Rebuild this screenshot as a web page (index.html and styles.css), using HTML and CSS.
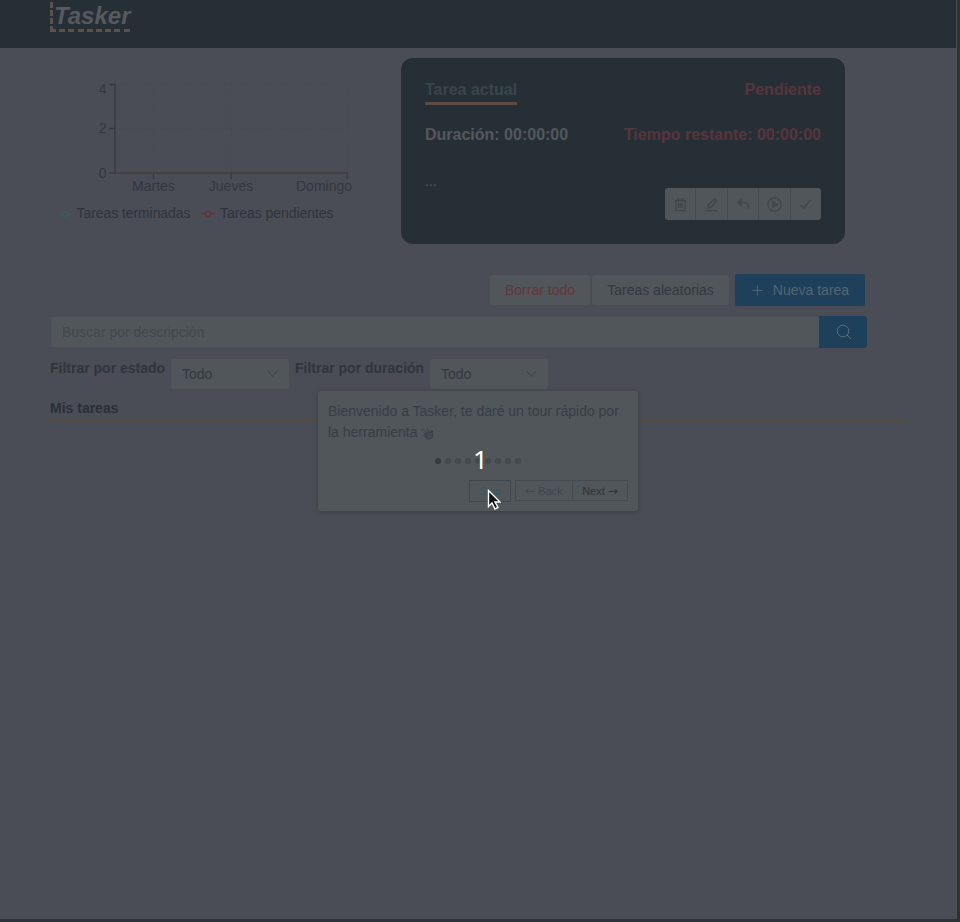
FILE: index.html
```html
<!DOCTYPE html>
<html lang="es">
<head>
<meta charset="utf-8">
<title>Tasker</title>
<link rel="stylesheet" href="styles.css">
</head>
<body>
<div class="app">
  <header class="header"><div class="logo">Tasker</div></header>
  <main>
    <section class="summary">
      <svg class="chart" width="330" height="170" viewBox="40 70 330 170">
        <g class="grid"><path d="M115 84.5H348M115 128.500H348M153.500 84V172M231.500 84V172M347.500 84V172"/></g>
        <path class="axis" d="M109 84.500H115V172.500M109 128.500H115M109 173H115M153.500 173v6M231 173v6M347 173v6"/>
        <path class="series" d="M115 173H348"/>
        <g class="ticks">
          <text x="106.500" y="94" text-anchor="end">4</text>
          <text x="106.500" y="133" text-anchor="end">2</text>
          <text x="106.500" y="178" text-anchor="end">0</text>
          <text x="153.500" y="191" text-anchor="middle">Martes</text>
          <text x="231" y="191" text-anchor="middle">Jueves</text>
          <text x="324" y="191" text-anchor="middle">Domingo</text>
        </g>
        <g class="done"><path d="M58 214h4.500M67.500 214h4.500"/><circle cx="65" cy="214" r="2.500"/></g>
        <g class="pending"><path d="M201 214h4.500M210.500 214h4.500"/><circle cx="208" cy="214" r="2.500"/></g>
        <g class="legend"><text x="76.500" y="218" textLength="114">Tareas terminadas</text><text x="220" y="218" textLength="113.500">Tareas pendientes</text></g>
      </svg>
      <article class="card">
        <div class="row"><h2 class="title">Tarea actual</h2><span class="red">Pendiente</span></div>
        <div class="row times"><span>Duración: 00:00:00</span><span class="red">Tiempo restante: 00:00:00</span></div>
        <p class="desc">...</p>
        <div class="actions">
          <span><svg viewBox="0 0 16 16"><path d="M1.500 4h13M5 4V2h6v2M3 4v10.500h10V4M6 6.500v5M8 6.500v5M10 6.500v5"/></svg></span>
          <span><svg viewBox="0 0 16 16"><path d="M1.500 14.500h13M4 11.500l.700-3L11 2l2.500 2.500-6.500 6.500zM9.500 3.500l2.500 2.500"/></svg></span>
          <span><svg viewBox="0 0 16 16"><path class="solid" d="M5.500 3L2 6l3.500 3z"/><path d="M3 6h6.500q3.800 0 3.800 6.500"/></svg></span>
          <span><svg viewBox="0 0 16 16"><circle cx="8" cy="8" r="7"/><path class="solid" d="M6.300 5l4.500 3-4.500 3z"/></svg></span>
          <span><svg viewBox="0 0 16 16"><path d="M2.500 8.500l3.500 3.500L13.500 3"/></svg></span>
        </div>
      </article>
    </section>
    <div class="toolbar">
      <div class="btn danger">Borrar todo</div>
      <div class="btn random">Tareas aleatorias</div>
      <div class="btn primary"><svg viewBox="0 0 14 14"><path d="M7 1.500v11M1.500 7h11"/></svg>Nueva tarea</div>
    </div>
    <div class="search">
      <div class="field">Buscar por descripción</div>
      <div class="go"><svg viewBox="0 0 16 16"><circle cx="7" cy="7" r="5.800"/><path d="M11 11l4 4"/></svg></div>
    </div>
    <div class="filters">
      <b class="status">Filtrar por estado</b>
      <div class="select">Todo<svg viewBox="0 0 12 8"><path d="M1 1l5 6 5-6"/></svg></div>
      <b class="duration">Filtrar por duración</b>
      <div class="select">Todo<svg viewBox="0 0 12 8"><path d="M1 1l5 6 5-6"/></svg></div>
    </div>
    <h3 class="tasks">Mis tareas</h3>
  </main>
</div>
<div class="tour">
  <p>Bienvenido a Tasker, te daré un tour rápido por la herramienta <svg class="wave" viewBox="0 0 14 14"><path class="palm" d="M3 7L9 4l1.500 2L11 3.500q1.500 0 1.500 2v3q0 4.500-4 4.500-2.500 0-4-2z"/><path d="M2.500 5.500l4 4M4 3.500l4 4.500M6.500 2l3.500 4.500M2.500 8.500l3 3M10.500 6.500l.500-3q1.500 0 1.500 2v3q0 4.500-4 4.500-2.500 0-4-2M.800 4l2-2.500"/></svg></p>
  <div class="dots"><i></i><i></i><i></i><i></i><i></i><i></i><i></i><i></i><i></i></div>
  <div class="nav"><span class="skip">Skip</span><span class="back"><em>←</em> Back</span><span class="next">Next <em>→</em></span></div>
</div>
<div class="count">1</div>
<svg class="cursor" width="14" height="22" viewBox="0 0 14 22"><path d="M1.500 1.500V17.500L5 14l3 6 3-1.500-3-5.500h5z"/></svg>
</body>
</html>
```

FILE: styles.css
```css
* { box-sizing: border-box; }
body { margin: 0; width: 960px; height: 922px; overflow: hidden; position: relative; background: #2c3337; color: #343840; font: 14px/22px "Liberation Sans", Arial, sans-serif; }
svg { fill: none; stroke: currentColor; }
.app { width: 957px; height: 919px; background: #4a4d55; border-right: 1px solid #4c4d50; }
.header { width: 956px; height: 48px; padding-left: 50px; background: #272f36; }
.logo { width: 81px; height: 32px; padding: 2px 0 0 1px; font: italic bold 24px/27px "Liberation Sans", Arial, sans-serif; color: #565a60; text-indent: 3px; background:
  repeating-linear-gradient(90deg, #5b534b 0 6px, transparent 6px 9.200px) 0 100% / 81px 3px no-repeat,
  repeating-linear-gradient(0deg, #5b534b 0 6px, transparent 6px 8px) 0 100% / 3px 30px no-repeat; }
main { padding: 10px 0 0 50px; }
.summary { display: flex; height: 186px; }
.chart { flex: none; margin: 12px 31px 0 -10px; }
.chart text { font-size: 14px; fill: #34373e; stroke: none; }
.chart .legend text { fill: #2f343b; }
.grid { stroke: #464951; stroke-dasharray: 2 3; }
.axis { stroke: #373a40; stroke-width: 1.300; }
.series { stroke: #473b40; stroke-width: 1.500; }
.done { color: #3e585b; stroke-width: 1.700; }
.pending { color: #663640; stroke-width: 1.700; }
.card { width: 444px; height: 186px; padding: 21px 24px 20px; background: #272f36; border-radius: 12px; font-size: 16px; color: #54585d; }
.row { display: flex; justify-content: space-between; height: 27px; font-weight: bold; }
.title { margin: 0; height: 26px; font-size: 16px; line-height: 22px; color: #39464b; border-bottom: 3px solid #5b4b40; }
.red { color: #58353e; }
.times { margin-top: 18px; height: 22px; }
.desc { margin: 24px 0 0; height: 18px; font-size: 14px; }
.actions { display: flex; width: 156px; height: 32px; margin-left: auto; background: #505659; border-radius: 3px; color: #42474c; }
.actions span { flex: 1; display: grid; place-items: center; }
.actions span + span { border-left: 1px solid #464b50; }
.actions svg { width: 15px; height: 15px; stroke-width: 1.500; }
.solid { fill: currentColor; }
.toolbar { display: flex; margin: 30px 0 0 440px; height: 32px; align-items: center; }
.btn { height: 30px; line-height: 30px; text-align: center; background: #50565a; border-radius: 3px; }
.danger { width: 100px; color: #63353f; }
.random { width: 137px; margin-left: 2px; }
.primary { width: 130px; height: 32px; margin-left: 6px; display: flex; align-items: center; justify-content: center; gap: 9px; background: #1e405b; color: #566570; }
.primary svg { width: 13px; }
.search { display: flex; width: 817px; height: 32px; margin-top: 10px; align-items: center; }
.field { width: 768px; height: 30px; margin-left: 1px; padding-left: 11px; line-height: 30px; background: #50565a; color: #43474e; border-radius: 3px 0 0 3px; }
.go { width: 48px; height: 32px; display: grid; place-items: center; background: #1e405b; border-radius: 0 3px 3px 0; color: #5b6c76; }
.go svg { width: 16px; margin-left: 1px; }
.filters { display: flex; height: 40px; padding-top: 11px; }
.filters b { line-height: 18px; flex: none; white-space: nowrap; color: #30353c; }
.status { width: 121px; }
.duration { width: 135px; margin-left: 6px; }
.select { width: 118px; height: 30px; padding: 0 11px; display: flex; align-items: center; justify-content: space-between; background: #50565a; border-radius: 3px; }
.select svg { width: 11px; color: #3d4247; }
.tasks { width: 856px; height: 24px; margin: 10px 0 0; border-bottom: 2px solid #554b3d; font-size: 14px; line-height: 20px; color: #2a3038; }
.tour { position: absolute; left: 318px; top: 391px; width: 320px; height: 120px; padding: 10px; background: #50565a; border-radius: 3px; box-shadow: 0 1px 5px #3b3e45; color: #393c46; }
.tour p { margin: 0; line-height: 21px; }
.wave { width: 13px; height: 13px; vertical-align: -3px; stroke-width: 1; }
.palm { fill: #464950; stroke: none; }
.dots { display: flex; justify-content: center; gap: 4px; margin-top: 15px; height: 6px; }
.dots i { width: 6px; height: 6px; border-radius: 50%; background: #444950; }
.dots i:first-child { background: #363b42; }
.nav { display: flex; justify-content: flex-end; margin-top: 16px; height: 22px; font-size: 11px; line-height: 20px; }
.nav span { height: 21px; border: 1px solid #464b52; text-align: center; white-space: nowrap; }
.nav em { font: normal 12px/10px "DejaVu Sans", sans-serif; }
.nav .skip { width: 42px; height: 22px; margin-right: 4px; color: #34566a; border-color: #42464e; }
.back { width: 58px; color: #42474f; }
.nav .next { width: 56px; margin-left: -1px; color: #2e3338; }
.count { position: absolute; left: 473px; top: 444px; font: 26px/30px "Noto Sans", sans-serif; color: #fff; }
.cursor { position: absolute; left: 487px; top: 489px; }
.cursor path { fill: #111518; stroke: #fff; stroke-width: 1.400; }
```
